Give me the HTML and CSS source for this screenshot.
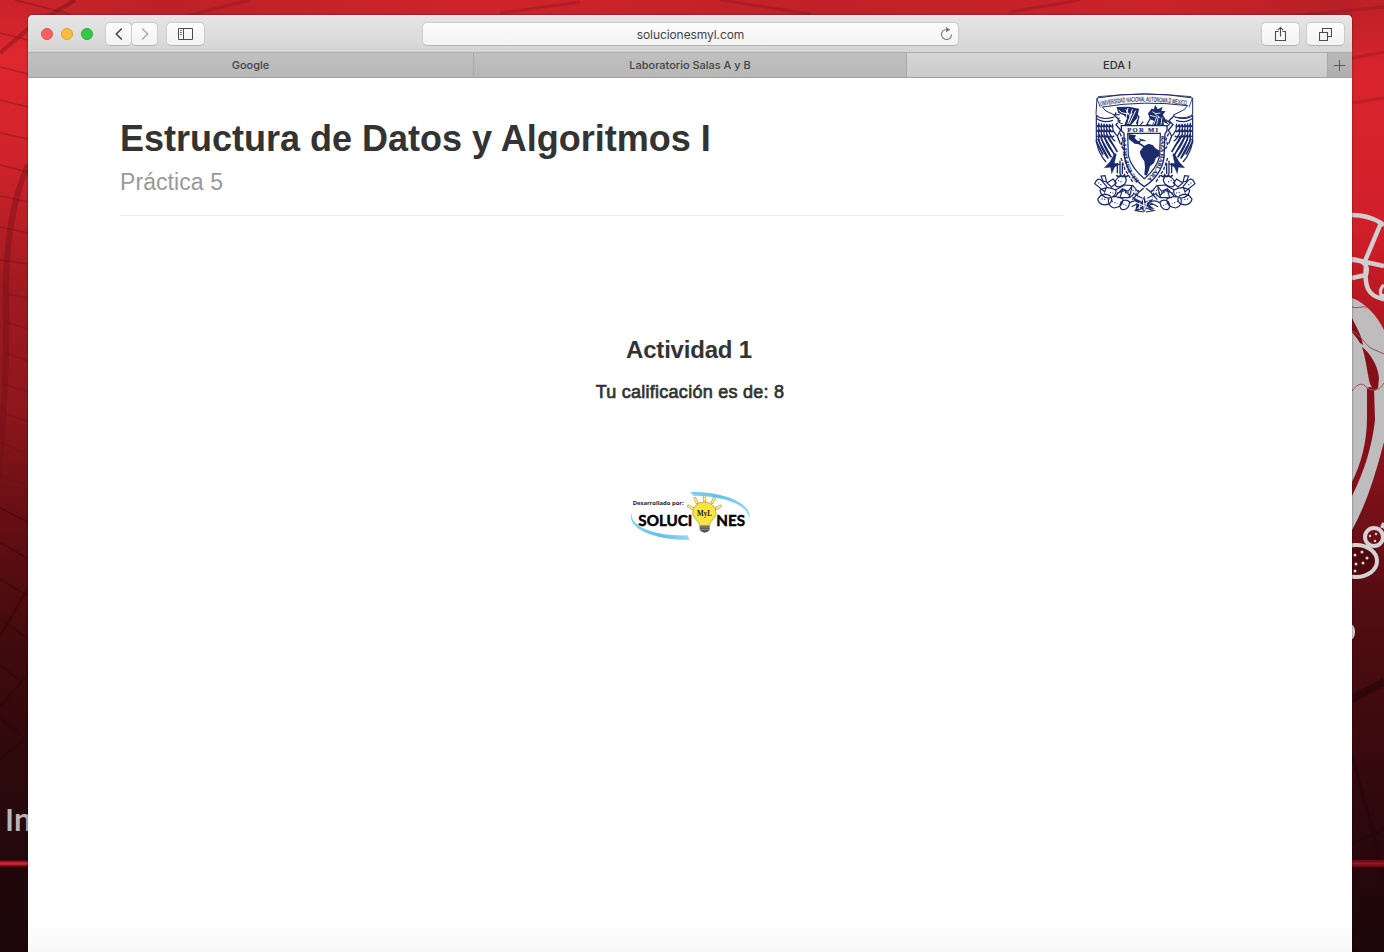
FILE: index.html
```html
<!DOCTYPE html>
<html lang="es">
<head>
<meta charset="utf-8">
<title>EDA I</title>
<link rel="stylesheet" href="styles.css">
</head>
<body>
<svg class="wallpaper" viewBox="0 0 1384 952" aria-hidden="true">
  <defs>
    <linearGradient id="wl" x1="0" y1="0" x2="0" y2="1">
      <stop offset="0" stop-color="#c8222a"/><stop offset=".06" stop-color="#e0272e"/><stop offset=".18" stop-color="#cd222a"/>
      <stop offset=".3" stop-color="#a01a20"/><stop offset=".43" stop-color="#8d171c"/><stop offset=".55" stop-color="#640e13"/>
      <stop offset=".68" stop-color="#400a0d"/><stop offset=".85" stop-color="#27080b"/><stop offset="1" stop-color="#1c070a"/>
    </linearGradient>
    <linearGradient id="wr" x1="0" y1="0" x2="0" y2="1">
      <stop offset="0" stop-color="#bd2027"/><stop offset=".08" stop-color="#d9242c"/><stop offset=".24" stop-color="#d11f29"/>
      <stop offset=".36" stop-color="#aa151f"/><stop offset=".5" stop-color="#83111a"/><stop offset=".62" stop-color="#560d13"/>
      <stop offset=".75" stop-color="#3f0a0e"/><stop offset=".9" stop-color="#27080b"/><stop offset="1" stop-color="#1b070a"/>
    </linearGradient>
    <linearGradient id="wt"><stop offset="0" stop-color="#c9242b"/><stop offset=".1" stop-color="#be2028"/><stop offset=".35" stop-color="#d0232b"/><stop offset=".6" stop-color="#c12028"/><stop offset=".85" stop-color="#cb222a"/><stop offset="1" stop-color="#b81f26"/></linearGradient>
  </defs>
  <rect width="700" height="952" fill="url(#wl)"/>
  <rect x="700" width="684" height="952" fill="url(#wr)"/>
  <rect x="28" width="1324" height="16" fill="url(#wt)"/>
  <g fill="none" stroke="#6d1016" stroke-opacity=".4">
    <path d="M0 53 28 29 75 0" stroke-width="4"/>
    <path d="M28 165C12 200 5 250 6 300S4 420-2 480" stroke-width="6"/>
    <path d="M15 0 70 14M0 33l28 7M0 67l28 7M0 100l28 7M0 133l28 6M0 165l28 7M0 196l28 6M0 227l28 6M0 260l28 4M6 294l22 4M6 322l22 7M6 353l22 8M5 384l23 8M4 413l24 9M2 443l26 11M0 475l28 11" stroke-width="1.5"/>
    <path d="M0 508l28 14M0 542l28 17M0 579l28 17M0 619l28 20M0 665l22 17M0 718l24 20L0 760" stroke="#240508" stroke-width="1.5"/>
    <path d="M28 588 0 636M28 675 0 706" stroke="#240508" stroke-width="2.5"/>
    <path d="M190 15 250 0M500 13 580 2M720 0l90 14M1010 12l70-12M1300 15l84-8M1352 58l32-6M1352 103l32-5" stroke-width="3" stroke-opacity=".25"/>
  </g>
  <g fill="none" stroke="#d0cecf" stroke-linejoin="round" stroke-width="4.5">
    <path d="M1352 215c12 0 21 3 29 8l-16 38M1384 225l-4-2M1352 259l32 7M1352 278l14-3c3-11-3-15-14-15M1366 265c-2 22 2 31 17 34l1-5"/>
    <path d="M1384 285c-5 4-4 9-2 13" stroke-width="3"/>
  </g>
  <path d="M1352 298c14 5 25 18 32 32v112c-9 34-18 63-32 88z" fill="#bfbcbd"/>
  <g fill="#850f19">
    <path d="M1352 318c4 9 9 15 11 27l-3-2c-3-5-6-8-8-11z"/>
    <path d="M1362 347c9 7 16 19 17 31l-1 10-4 3-4-7c-3-12-4-25-8-37z"/>
    <path d="M1367 388c3-2 5-1 7 1l1 31c-3 27-11 52-23 76v-14c9-18 15-40 15-64z"/>
  </g>
  <path d="M1352 307c8 2 11-2 15 1M1352 331c9 3 13 15 21 18l11 5M1352 391c6-8 11-9 15-3 7 4 13 2 17-5" fill="none" stroke="#9d5159"/>
  <g fill="none" stroke="#d4d2d2" stroke-width="4"><circle cx="1374" cy="537" r="9"/><ellipse cx="1356" cy="561" rx="21" ry="16" fill="#4d090d"/><path d="M1382 528l2-5"/></g>
  <g fill="#d4d2d2"><circle cx="1355" cy="555" r="1.5"/><circle cx="1362" cy="552" r="1.5"/><circle cx="1367" cy="558" r="1.5"/><circle cx="1356" cy="564" r="1.5"/><circle cx="1363" cy="563" r="1.5"/><circle cx="1355" cy="571" r="1.5"/><circle cx="1370" cy="536" r="1.2"/><circle cx="1376" cy="534" r="1.2"/><circle cx="1375" cy="541" r="1.2"/><ellipse cx="1350" cy="632" rx="5" ry="8"/></g>
  <g fill="none" stroke="#230508" stroke-opacity=".6"><path d="M1352 699l32-17" stroke-width="8"/><path d="M1352 755l20 72 12 55M1352 844l32-15" stroke-width="3"/></g>
  <text x="5" y="831" class="wall-text">In</text>
  <path d="M0 863.5h28" stroke="#7d111c" stroke-width="6"/><path d="M0 863.5h28" stroke="#e01c32" stroke-width="2.5"/>
  <path d="M1352 863.5h32" stroke="#671019" stroke-width="7"/><path d="M1352 863.5h32" stroke="#9c1721" stroke-width="2"/>
</svg>

<div class="window">
  <header class="toolbar">
    <div class="lights"><i class="red"></i><i class="yellow"></i><i class="green"></i></div>
    <div class="nav">
      <button class="btn back" aria-label="Atrás"><svg width="12" height="14" viewBox="0 0 12 14"><path d="M8.800 1.500 3.300 7l5.500 5.500" stroke="#444" stroke-width="1.500"/></svg></button>
      <button class="btn forward" aria-label="Adelante"><svg width="12" height="14" viewBox="0 0 12 14"><path d="M3.200 1.500 8.700 7l-5.500 5.500" stroke="#aaa" stroke-width="1.400"/></svg></button>
    </div>
    <button class="btn side" aria-label="Barra lateral"><svg width="15" height="12" viewBox="0 0 15 12"><path d="M.5.5h14v11H.5zM5.500.5v11" stroke="#4c4c4c"/><path d="M2 2.500h2M2 4.500h2M2 6.500h2" stroke="#777"/></svg></button>
    <div class="address"><span>solucionesmyl.com</span><svg width="13" height="14" viewBox="0 0 13 14"><path d="M6.700 2.500a5 5 0 1 0 4.800 5" stroke="#777" stroke-width="1.100"/><path d="M6 0l4.300 2.700L6 5.300z" fill="#777"/></svg></div>
    <div class="tools">
      <button class="btn" aria-label="Compartir"><svg width="13" height="16" viewBox="0 0 13 16"><path d="M4.500 5.500h-3v9h10v-9h-3M6.500 10.500v-9M3.800 4.200l2.700-2.700 2.700 2.700" stroke="#4c4c4c" stroke-width="1.100"/></svg></button>
      <button class="btn" aria-label="Pestañas"><svg width="13" height="13" viewBox="0 0 13 13"><path d="M.5 4.500h8v8h-8zM3.500 4.500v-4h9v8h-4" stroke="#4c4c4c" stroke-width="1.100"/></svg></button>
    </div>
  </header>
  <nav class="tabs">
    <div class="tab google">Google</div><div class="tab lab">Laboratorio Salas A y B</div><div class="tab active">EDA I</div>
    <button class="plus" aria-label="Nueva pestaña"><svg width="11" height="11" viewBox="0 0 11 11"><path d="M5.500 0v11M0 5.500h11" stroke="#5c5c5c"/></svg></button>
  </nav>
  <main class="page">
    <div class="top">
      <div class="heading"><h1>Estructura de Datos y Algoritmos I</h1><p>Práctica 5</p></div>
      <svg class="crest" viewBox="0 0 330 390" role="img" aria-label="Escudo UNAM">
        <defs>
          <path id="arc" d="M31 54Q163 27 299 54"/>
          <path id="pr" d="M214 143L211 204Q201 249 167 278"/>
          <path id="pl" d="M148 279Q119 251 110 198L107 143"/>
          <g id="wing">
            <path d="M18 78c3 16 20 20 43 20l28-8 6 19-1 95-8 25-13 18-14-26-18-17-16-40-6-35z" fill="#fff" stroke="none"/>
            <path d="M18 80c12 16 34 13 55 7M18 90c15 13 35 12 51 7M19 83v75q5 37 29 64M26 104v45q4 32 29 63M34 106v40q5 30 27 59M42 107v36q6 26 25 48M50 108v32q7 20 23 35M58 109v26q8 19 18 25M67 107l2 20 11 16"/>
            <path d="M20 112q6 8 7 0q6 8 8 0q6 8 8 0q6 8 8 0q6 8 9 0q6 8 9 0M21 127q6 8 7 0q6 8 8 0q6 8 8 0q6 8 8 0q6 8 9 0q6 8 10 0M22 143q6 8 7 0q6 8 8 0q6 8 8 0q6 8 8 0q6 8 9 0q6 8 10 0" stroke-width="5"/>
            <path d="M18 158l21 42M23 152l31 58M33 151l31 57M44 149l29 51M55 146l27 46" stroke-width="5"/>
            <path d="M43 239l17-18 14-25 5 3-6 27 18 2-17 9-9 20-3-19z" class="ink" stroke-width="1"/>
            <path d="M72 81l18 17-12 12 14 16-10 18 9 23M82 225v31M90 218v40M97 226v32" stroke-width="4"/>
            <path d="M79 261q7 10 13 0q4 10 11 0q4 10 12 0" stroke-width="5"/>
          </g>
          <g id="cacti">
            <path d="M14 287q9-21 21-9l15 18-6 15zM33 264l12-1 5 19-11-3zM51 285l18-12 10 12-14 12zM75 281q8-18 27-17 13 12 1 25-17 14-27 3zM30 307q22-16 48 0 2 20-24 23-21-3-24-23zM23 334q12-23 37-11 11 12-1 24-28 11-36-13zM57 330q23-10 42 3 0 24-27 27-23-8-15-30zM94 341q15-10 25 1-2 24-22 23-13-7-3-24z"/>
            <path d="M77 324l20-22 17 8 14-18 18 21 15-12M83 329h36l13-12 25 14M98 304l-8 24M126 298l-9 30M145 315l-18 20M119 345q15-12 35-1M125 356l20-10 13 15-20 7 23 4M76 306l28-15 22 2M80 316l24-9 15 16"/>
            <path d="M25 284l12 9M42 315l18 8M60 313l10 2M35 333l17 2M66 340l16 7M84 278l12 4M100 348l9 5M119 320l24 8M105 314l37 2M128 307l24 2" stroke-dasharray="3 5" stroke-width="4"/>
          </g>
        </defs>
        <g fill="none" stroke="#1b2b6b" stroke-width="3.600">
          <use href="#wing"/><use href="#wing" transform="matrix(-1 0 0 1 327 0)"/>
          <path d="M18 79l3-49Q163 5 308 30v48q-11 15-50 10l-8-7 31-15 12-13Q163 36 37 57l11 12 25 12" fill="#fff" stroke-width="3"/>
          <path d="M24 26Q163 11 304 26M31 58l-10-26M297 58l10-27" stroke-width="2.500"/>
          <path class="ink" d="M86 73l-4-14 34-1 29 6-5 25-21 24h-15l9-22-11-11z"/>
          <path d="M86 66l9 8 20 4M114 60l-7 35M127 64l-14 44M137 68l-19 40M96 83l-14 19 14 7M107 64l13 20M126 75l-10 24" stroke="#fff" stroke-width="3"/>
          <path d="M79 73l-5 8 15-2M88 89q-11 14 10 19M137 75l10 12-8 20M144 95l-2 17"/>
          <path class="ink" d="M176 77l10-13 6 3 4-12 7 11 12-6-3 10 11 1-7 9 15 25-14-7 4 16-34-1 8-15-14-6z"/>
          <path d="M187 71l11 6 13-2M180 82l20 5-9 23M205 85l-5 25M216 88l-3 22M194 77l17 13" stroke="#fff" stroke-width="2.500"/>
          <path d="M181 92l-11 18 15 2M228 95l12 11-9 10M160 101l-11 12 20 2"/>
          <path d="M94 113h137v16l-6 8-3 72q-8 54-59 87-48-31-59-87l-2-73-8-8z" fill="#fff" stroke-width="4"/>
          <path d="M113 136h98l-2 67q-8 38-46 69-39-32-48-69z" fill="#fff"/>
          <path d="M90 136l8 17-5 19 8 13M236 136l-8 17 5 19-8 13M93 210l12 35 24 38M233 210l-12 35-24 38" stroke-width="4" stroke-dasharray="10 4"/>
          <path class="ink" stroke="none" d="M115 138l23 4-4 8 9 9 10-2-3 8 13 8-3 4-14-8-12-2-18-14zM145 151l17 4 8 5-16-1zM162 174l14-7 13 5 7 9 13 7-2 16-10 7-5 14-12 10-4 14-6 14-7-3 2-23-2-17-9-14-5-15z"/>
          <use href="#cacti"/><use href="#cacti" transform="matrix(-1 0 0 1 329 0)"/>
          <path d="M127 327l13 20-4 22 18-8 9 11 6-12 24 3-17-13 13-17-22 8-4-17-8 17z" class="ink" stroke-width="1"/>
          <path d="M132 341l43 18M178 339l-36 23M160 334l3 33M150 343l-2 20M170 345l-6 20" stroke="#fff" stroke-width="3"/>
        </g>
        <g class="crest-text">
          <text font-size="20"><textPath href="#arc" textLength="260" lengthAdjust="spacingAndGlyphs">UNIVERSIDAD NACIONAL AUTONOMA D MEXICO</textPath></text>
          <text x="112" y="131" class="motto" textLength="92">POR MI</text>
          <text class="motto small"><textPath href="#pr" textLength="142" lengthAdjust="spacingAndGlyphs">RAZA HABLARA</textPath></text>
          <text class="motto small"><textPath href="#pl" textLength="142" lengthAdjust="spacingAndGlyphs">EL ESPIRITU</textPath></text>
        </g>
      </svg>
    </div>
    <section class="result">
      <h3>Actividad 1</h3>
      <h4>Tu calificación es de: 8</h4>
      <svg class="logo" viewBox="0 0 420 210" role="img" aria-label="Desarrollado por: Soluciones MyL">
        <defs><linearGradient id="sky"><stop stop-color="#87cdf0"/><stop offset=".5" stop-color="#5fc2ec"/><stop offset="1" stop-color="#9bd4f3"/></linearGradient></defs>
        <path d="M211 36C310 34 402 70 387 117 388 75 311 47 221 47z" fill="url(#sky)"/>
        <path d="M35 96C17 144 97 180 209 180l-6-14C101 169 27 139 35 96z" fill="url(#sky)"/>
        <text x="38" y="75" class="by" textLength="153" lengthAdjust="spacingAndGlyphs">Desarrollado por:</text>
        <text x="55" y="139" class="brand" textLength="162" lengthAdjust="spacingAndGlyphs">SOLUCI</text>
        <text x="289" y="139" class="brand" textLength="86" lengthAdjust="spacingAndGlyphs">NES</text>
        <path d="M254 49v13M225 55l6 12M283 55l-6 12M206 78l12 7M301 78l-12 7" stroke="#b9a14c" stroke-width="9" stroke-linecap="round"/>
        <path d="M254 49v13M225 55l6 12M283 55l-6 12M206 78l12 7M301 78l-12 7" stroke="#ffef91" stroke-width="5" stroke-linecap="round"/>
        <path d="M239 137c0-13-21-21-21-39a35 32 0 0 1 70 0c0 18-20 26-20 39z" fill="#f9e444" stroke="#a58e35" stroke-width="2"/>
        <path d="M239 137h30v13l-6 5-9 3-9-3-6-5z" fill="#555"/><path d="M239 141h30M240 148h28" stroke="#aaa" stroke-width="2"/>
        <text x="231" y="109" class="myl" textLength="45" lengthAdjust="spacingAndGlyphs">MyL</text>
      </svg>
    </section>
  </main>
</div>
</body>
</html>
```
FILE: styles.css
```css
* { box-sizing: border-box; }
body { margin: 0; height: 952px; overflow: hidden; position: relative; padding: 15px 32px 0 28px; background: #3a080c; font-family: "Liberation Sans", Arial, sans-serif; }
.wallpaper { position: absolute; left: 0; top: 0; width: 1384px; height: 952px; }
.wall-text { font: 500 32px Roboto, sans-serif; fill: #b9b5b6; }
.window { position: relative; display: flex; flex-direction: column; height: 937px; border-radius: 5px 5px 0 0; overflow: hidden; background: #fff; box-shadow: 0 0 2px rgba(0,0,0,.6); }
.toolbar { height: 37px; flex: none; display: flex; align-items: center; padding: 1px 7px 0 13px; background: linear-gradient(#e6e6e6, #d5d5d5); box-shadow: inset 0 1px #f4f4f4; }
.lights { display: flex; gap: 8px; }
.lights i { width: 12px; height: 12px; border-radius: 50%; border: 1px solid; }
.lights .red { background: #fc605c; border-color: #e2504c; }
.lights .yellow { background: #fdbc40; border-color: #dfa033; }
.lights .green { background: #34c84a; border-color: #2bac3a; }
.btn { display: flex; align-items: center; justify-content: center; width: 39px; height: 24px; padding: 0; border: 1px solid #cbcbcb; border-bottom-color: #b3b3b3; border-radius: 5px; background: linear-gradient(#fdfdfd, #f3f3f3); }
svg { display: block; fill: none; }
.nav { display: flex; margin-left: 12px; }
.nav .btn { width: 27px; }
.nav .forward { margin-left: -1px; }
.side { margin-left: 8px; }
.address { display: flex; align-items: center; width: 537px; height: 24px; margin-left: 217px; padding: 0 5px 0 18px; border: 1px solid #cbcbcb; border-bottom-color: #b3b3b3; border-radius: 5px; background: linear-gradient(#fdfdfd, #f3f3f3); font: 12px Inter, sans-serif; color: #444; }
.address span { flex: 1; text-align: center; letter-spacing: -.08px; }
.tools { display: flex; gap: 6px; margin-left: auto; }
.tabs { display: flex; height: 26px; flex: none; border-top: 1px solid #acacac; border-bottom: 1px solid #a1a1a1; background: linear-gradient(#c0c0c0, #b7b7b7); font: 500 11px/24px Inter, sans-serif; color: #444; text-align: center; }
.tab { border-right: 1px solid #a8a8a8; }
.google { width: 446px; }
.lab { width: 433px; letter-spacing: -.02px; }
.active { width: 421px; background: linear-gradient(#d6d6d6, #cbcbcb); color: #333; }
.plus { flex: 1; display: flex; align-items: center; justify-content: center; padding: 0 2px 0 0; border: 0; background: linear-gradient(#b8b8b8, #afafaf); }
.page { flex: 1; display: flex; flex-direction: column; background: linear-gradient(#fff calc(100% - 30px), #f8f8f8); color: #333; }
.top { display: flex; gap: 25px; padding: 10px 0 0 92px; }
.heading { width: 945px; height: 128px; padding-top: 30px; border-bottom: 1px solid #eee; }
h1 { margin: 0; font-size: 36px; line-height: 42px; white-space: nowrap; }
.heading p { margin: 4px 0 0; font-size: 23px; line-height: 36px; color: #999; letter-spacing: .08px; }
.crest { width: 110px; height: 130px; }
.crest .ink { fill: #1b2b6b; }
.crest-text { fill: #1b2b6b; font-family: "Liberation Sans", sans-serif; stroke: #1b2b6b; stroke-width: .5px; }
.motto { font: bold 20px "Liberation Serif", serif; }
.motto.small { font-size: 16px; }
.result { display: flex; flex-direction: column; align-items: center; padding-top: 116px; }
h3 { margin: 0 2px 0 0; font-size: 24px; line-height: 32px; letter-spacing: -.2px; }
h4 { margin: 15px 0 0; font-size: 18px; font-weight: 400; line-height: 22px; -webkit-text-stroke: .7px #333; letter-spacing: .26px; }
.logo { width: 140px; height: 70px; margin-top: 77px; }
.by { font: bold 17px "Open Sans", sans-serif; fill: #222; }
.brand { font: bold 47px Lato, sans-serif; fill: #000; stroke: #000; stroke-width: 1.5px; }
.myl { font: bold 26px "Liberation Serif", serif; fill: #222; }
```
